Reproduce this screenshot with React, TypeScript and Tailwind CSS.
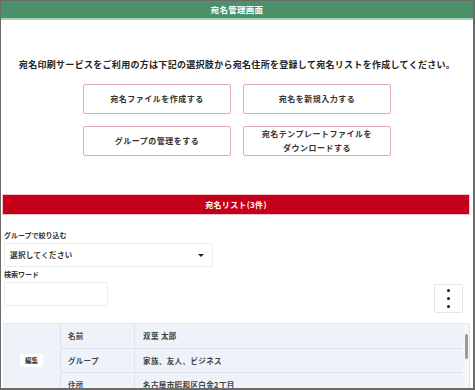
import React from 'react';

const font = { fontFamily: '"Noto Sans CJK JP", "Noto Sans", sans-serif' };

const rows = [
    { label: '名前', value: '双葉 太郎' },
    { label: 'グループ', value: '家族、友人、ビジネス' },
    { label: '住所', value: '名古屋市昭和区白金2丁目' },
];

const ActionButton: React.FC<{ children: React.ReactNode }> = ({ children }) => (
    <button className="h-[30px] w-[148px] rounded-[2px] border border-[#deaab3] bg-white text-[8px] font-bold leading-[14px] tracking-[0.5px] text-[#333]">
        {children}
    </button>
);

const App: React.FC = () => {
    return (
        <div
            className="h-[390px] w-[475px] overflow-hidden border-t border-b-2 border-l border-r-2 border-[#6b6b6b] bg-white"
            style={font}
        >
            {/* Header */}
            <div className="flex h-[19px] items-center justify-center border-b-2 border-[#a6d0b8] bg-[#4a916a]">
                <span className="text-[8.5px] font-bold tracking-[0.3px] text-white">宛名管理画面</span>
            </div>

            <p className="mt-[39px] text-center text-[9px] font-bold leading-[12px] tracking-[0.3px] text-[#222]">
                宛名印刷サービスをご利用の方は下記の選択肢から宛名住所を登録して宛名リストを作成してください。
            </p>

            {/* Menu buttons */}
            <div className="mt-[13px] flex justify-center">
                <div className="grid grid-cols-2 gap-x-[12px] gap-y-[12px]">
                    <ActionButton>宛名ファイルを作成する</ActionButton>
                    <ActionButton>宛名を新規入力する</ActionButton>
                    <ActionButton>グループの管理をする</ActionButton>
                    <ActionButton>
                        宛名テンプレートファイルを
                        <br />
                        ダウンロードする
                    </ActionButton>
                </div>
            </div>

            {/* List bar */}
            <div className="ml-[1px] mr-[3px] mt-[38px] flex h-[21px] items-center justify-center border border-[#f3c3c8] bg-[#c4001a]">
                <span className="text-[8px] font-bold tracking-[0.3px] text-white">宛名リスト(3件)</span>
            </div>

            {/* Filters */}
            <div className="pl-[3px] pr-[10px]">
                <div className="mt-[15px] text-[7px] font-semibold leading-[10px] text-[#333]">グループで絞り込む</div>
                <div className="mt-[3px] flex h-[24px] w-[209px] items-center justify-between rounded-[2px] border border-[#ececec] bg-white pl-[5px] pr-[8px]">
                    <span className="text-[7.5px] font-semibold tracking-[0.4px] text-[#333]">選択してください</span>
                    <span className="h-0 w-0 border-x-[3px] border-t-[3.5px] border-x-transparent border-t-[#222]" />
                </div>
                <div className="mt-[2px] text-[7px] font-semibold leading-[10px] text-[#333]">検索ワード</div>
                <div className="mt-[3px] flex items-start justify-between">
                    <div className="h-[24px] w-[104px] rounded-[2px] border border-[#ececec] bg-white" />
                    <button className="mt-[2px] flex h-[29px] w-[29px] flex-col items-center justify-center gap-[5px] rounded-[2px] border border-[#e6e6e6] bg-white">
                        <span className="h-[3px] w-[3px] rounded-full bg-[#111]" />
                        <span className="h-[3px] w-[3px] rounded-full bg-[#111]" />
                        <span className="h-[3px] w-[3px] rounded-full bg-[#111]" />
                    </button>
                </div>
            </div>

            {/* List table */}
            <div className="ml-[2px] mr-[3px] mt-[10px] flex border-t border-[#e3e8f0] bg-[#eef2f9]">
                <div className="flex flex-1">
                    <div className="flex w-[58px] items-center justify-center border-r border-[#dfe4ec]">
                        <span className="rounded-[1px] bg-white px-[5px] py-[2px] text-[6.5px] font-bold leading-[9px] text-[#333]">
                            編集
                        </span>
                    </div>
                    <div className="flex-1">
                        {rows.map((row) => (
                            <div key={row.label} className="flex h-[24.5px] border-b border-[#dfe4ec]">
                                <div className="flex w-[74px] items-center border-r border-[#dfe4ec] pl-[7px] text-[7.5px] font-semibold tracking-[0.3px] text-[#444]">
                                    {row.label}
                                </div>
                                <div className="flex flex-1 items-center pl-[8px] text-[7.5px] font-semibold tracking-[0.4px] text-[#444]">
                                    {row.value}
                                </div>
                            </div>
                        ))}
                    </div>
                </div>
                {/* Scrollbar */}
                <div className="w-[7px] border-r border-[#e3e3e3] bg-[#f4f6fa] pl-[2px]">
                    <div className="mt-[10px] h-[25px] w-[3px] rounded-full bg-[#9a9a9a]" />
                </div>
            </div>
        </div>
    );
};

export default App;
